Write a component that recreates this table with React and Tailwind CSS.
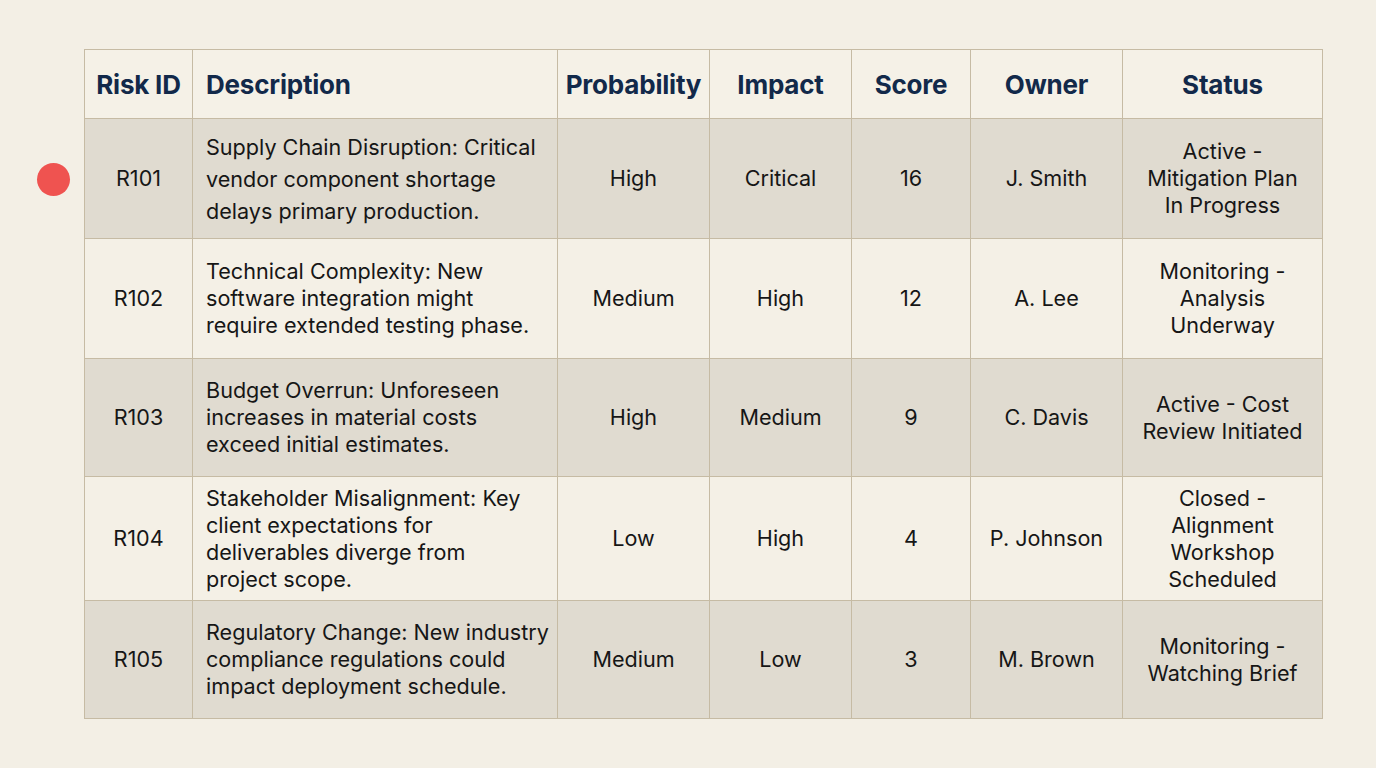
const rows = [
  {
    id: "R101",
    desc: ["Supply Chain Disruption: Critical", "vendor component shortage", "delays primary production."],
    prob: "High",
    impact: "Critical",
    score: "16",
    owner: "J. Smith",
    status: ["Active -", "Mitigation Plan", "In Progress"],
    h: "h-[120px]",
    lead: "leading-[32px]",
  },
  {
    id: "R102",
    desc: ["Technical Complexity: New", "software integration might", "require extended testing phase."],
    prob: "Medium",
    impact: "High",
    score: "12",
    owner: "A. Lee",
    status: ["Monitoring -", "Analysis", "Underway"],
    h: "h-[120px]",
    lead: "leading-[27px]",
  },
  {
    id: "R103",
    desc: ["Budget Overrun: Unforeseen", "increases in material costs", "exceed initial estimates."],
    prob: "High",
    impact: "Medium",
    score: "9",
    owner: "C. Davis",
    status: ["Active - Cost", "Review Initiated"],
    h: "h-[118px]",
    lead: "leading-[27px]",
  },
  {
    id: "R104",
    desc: ["Stakeholder Misalignment: Key", "client expectations for", "deliverables diverge from", "project scope."],
    prob: "Low",
    impact: "High",
    score: "4",
    owner: "P. Johnson",
    status: ["Closed -", "Alignment", "Workshop", "Scheduled"],
    h: "h-[124px]",
    lead: "leading-[27px]",
  },
  {
    id: "R105",
    desc: ["Regulatory Change: New industry", "compliance regulations could", "impact deployment schedule."],
    prob: "Medium",
    impact: "Low",
    score: "3",
    owner: "M. Brown",
    status: ["Monitoring -", "Watching Brief"],
    h: "h-[118px]",
    lead: "leading-[27px]",
  },
];

function Lines({ lines }) {
  return lines.map((l, i) => (
    <span key={i} className="block whitespace-nowrap">
      {l}
    </span>
  ));
}

export default function App() {
  const th = "border border-[#c6bba4] text-[26px] font-bold text-[#12294a] tracking-[-0.2px]";
  const td = "border border-[#c6bba4] text-center";
  return (
    <div
      className="min-h-screen w-full bg-[#f3efe5] pt-[49px] pl-[84px] text-[#161616]"
      style={{ fontFamily: "Inter, 'Noto Sans', sans-serif" }}
    >
      <div className="relative w-[1238px]">
        <table className="table-fixed border-collapse w-[1238px] text-[21.6px]">
          <colgroup>
            <col className="w-[108px]" />
            <col className="w-[365px]" />
            <col className="w-[152px]" />
            <col className="w-[142px]" />
            <col className="w-[119px]" />
            <col className="w-[152px]" />
            <col className="w-[200px]" />
          </colgroup>
          <thead>
            <tr className="h-[69px] bg-[#f5f1e7]">
              <th className={th + " text-center"}>Risk ID</th>
              <th className={th + " text-left pl-[13px]"}>Description</th>
              <th className={th + " text-center"}>Probability</th>
              <th className={th + " text-center"}>Impact</th>
              <th className={th + " text-center"}>Score</th>
              <th className={th + " text-center"}>Owner</th>
              <th className={th + " text-center"}>Status</th>
            </tr>
          </thead>
          <tbody>
            {rows.map((r, i) => (
              <tr key={r.id} className={`${r.h} ${i % 2 === 0 ? "bg-[#e0dbd0]" : "bg-[#f4f0e6]"}`}>
                <td className={td}>{r.id}</td>
                <td className={`border border-[#c6bba4] text-left pl-[13px] pr-[2px] ${r.lead}`}>
                  <Lines lines={r.desc} />
                </td>
                <td className={td}>{r.prob}</td>
                <td className={td}>{r.impact}</td>
                <td className={td}>{r.score}</td>
                <td className={td}>{r.owner}</td>
                <td className={td + " leading-[27px]"}>
                  <Lines lines={r.status} />
                </td>
              </tr>
            ))}
          </tbody>
        </table>
        <span className="absolute left-[-47px] top-[114px] h-[33px] w-[33px] rounded-full bg-[#ef5350]" />
      </div>
    </div>
  );
}
